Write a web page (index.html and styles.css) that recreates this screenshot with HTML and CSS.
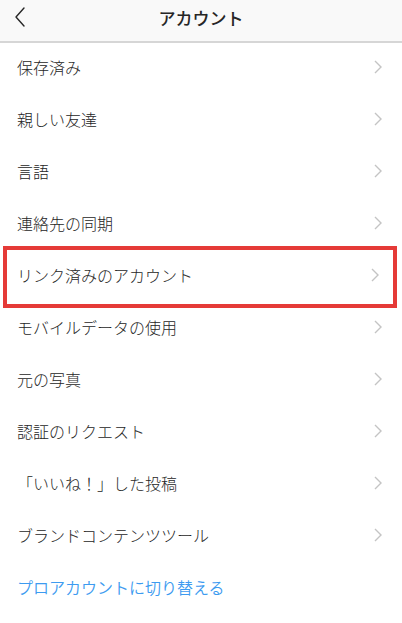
FILE: index.html
```html
<!DOCTYPE html>
<html lang="ja">
<head>
<meta charset="utf-8">
<link rel="stylesheet" href="styles.css">
</head>
<body>
<div class="app">
  <header class="header">
    <svg class="back" width="12" height="20" viewBox="0 0 12 20"><path d="M10 1 L2 10 L10 19" fill="none" stroke="#262626" stroke-width="1.4" stroke-linecap="round" stroke-linejoin="round"/></svg>
    <h1 class="title">アカウント</h1>
  </header>
  <ul class="list">
    <li class="row"><span>保存済み</span><svg class="chev" viewBox="0 0 8 14"><path d="M1 1 L7 7 L1 13" fill="none" stroke="#c4c4c4" stroke-width="1.4"/></svg></li>
    <li class="row"><span>親しい友達</span><svg class="chev" viewBox="0 0 8 14"><path d="M1 1 L7 7 L1 13" fill="none" stroke="#c4c4c4" stroke-width="1.4"/></svg></li>
    <li class="row"><span>言語</span><svg class="chev" viewBox="0 0 8 14"><path d="M1 1 L7 7 L1 13" fill="none" stroke="#c4c4c4" stroke-width="1.4"/></svg></li>
    <li class="row"><span>連絡先の同期</span><svg class="chev" viewBox="0 0 8 14"><path d="M1 1 L7 7 L1 13" fill="none" stroke="#c4c4c4" stroke-width="1.4"/></svg></li>
    <li class="row row-hl"><span>リンク済みのアカウント</span><svg class="chev" viewBox="0 0 8 14"><path d="M1 1 L7 7 L1 13" fill="none" stroke="#c4c4c4" stroke-width="1.4"/></svg></li>
    <li class="row"><span>モバイルデータの使用</span><svg class="chev" viewBox="0 0 8 14"><path d="M1 1 L7 7 L1 13" fill="none" stroke="#c4c4c4" stroke-width="1.4"/></svg></li>
    <li class="row"><span>元の写真</span><svg class="chev" viewBox="0 0 8 14"><path d="M1 1 L7 7 L1 13" fill="none" stroke="#c4c4c4" stroke-width="1.4"/></svg></li>
    <li class="row"><span>認証のリクエスト</span><svg class="chev" viewBox="0 0 8 14"><path d="M1 1 L7 7 L1 13" fill="none" stroke="#c4c4c4" stroke-width="1.4"/></svg></li>
    <li class="row"><span>「いいね！」した投稿</span><svg class="chev" viewBox="0 0 8 14"><path d="M1 1 L7 7 L1 13" fill="none" stroke="#c4c4c4" stroke-width="1.4"/></svg></li>
    <li class="row"><span>ブランドコンテンツツール</span><svg class="chev" viewBox="0 0 8 14"><path d="M1 1 L7 7 L1 13" fill="none" stroke="#c4c4c4" stroke-width="1.4"/></svg></li>
    <li class="row row-link"><span>プロアカウントに切り替える</span></li>
  </ul>
</div>
</body>
</html>
```
FILE: styles.css
```css
* { box-sizing: border-box; }
html, body { margin: 0; padding: 0; }
body {
  width: 402px;
  height: 623px;
  overflow: hidden;
  background: #fff;
  font-family: "Noto Sans CJK JP", "Noto Sans", sans-serif;
  color: #262626;
}
.header {
  height: 43px;
  background: #f9f9f9;
  border-bottom: 2px solid #d6d6d6;
  display: flex;
  align-items: center;
  justify-content: center;
  position: relative;
}
.back {
  position: absolute;
  left: 14px;
  top: 7px;
}
.title {
  margin: 0;
  font-size: 17px;
  font-weight: 500;
  line-height: 1;
  padding-bottom: 6px;
}
.list {
  list-style: none;
  margin: 0;
  padding: 0;
}
.row {
  height: 52px;
  display: flex;
  align-items: center;
  justify-content: space-between;
  padding: 0 17px 4px 17px;
  font-size: 16px;
  font-weight: 300;
  color: #262626;
}
.chev {
  width: 8px;
  height: 14px;
  margin-right: 3px;
}
.row-hl {
  margin: -5px 5px -5px 3px;
  padding: 0 14px 4px 10px;
  border: 4px solid #e53a37;
  height: 62px;
}
.row-hl .chev { margin-right: 0; }
.row-link {
  color: #3d9bf0;
  font-weight: 350;
}
```
